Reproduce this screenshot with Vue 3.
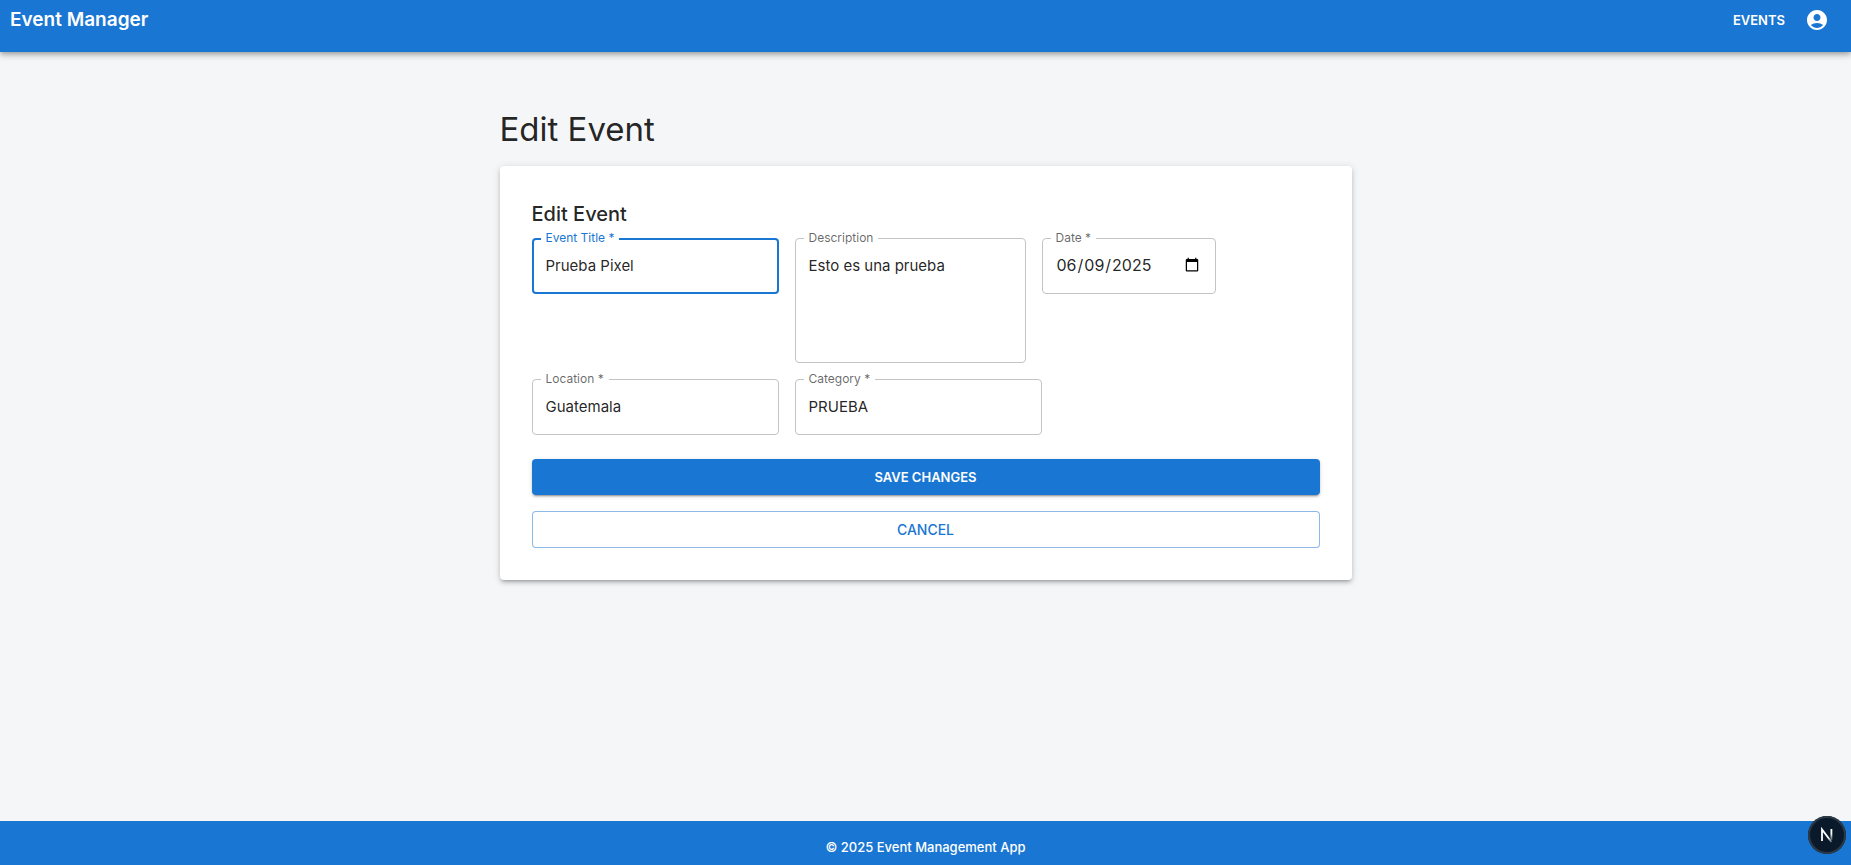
<script setup>
import { ref } from 'vue'

const title = ref('Prueba Pixel')
const description = ref('Esto es una prueba')
const date = ref('2025-06-09')
const location = ref('Guatemala')
const category = ref('PRUEBA')
</script>

<template>
  <div class="page">
    <header class="bar">
      <a class="brand" href="#">Event Manager</a>
      <nav class="nav">
        <a class="nav-link" href="#">EVENTS</a>
        <button class="account" type="button" aria-label="Account">
          <svg viewBox="0 0 24 24" width="24" height="24" fill="currentColor" aria-hidden="true">
            <path d="M12 2C6.48 2 2 6.48 2 12s4.48 10 10 10 10-4.48 10-10S17.52 2 12 2m0 4c1.93 0 3.5 1.57 3.5 3.5S13.93 13 12 13s-3.5-1.57-3.5-3.5S10.070 6 12 6m0 14c-2.030 0-4.430-.82-6.140-2.880C7.550 15.800 9.680 15 12 15s4.450.8 6.140 2.120C16.430 19.180 14.030 20 12 20" />
          </svg>
        </button>
      </nav>
    </header>

    <main class="content">
      <h1 class="heading">Edit Event</h1>
      <form class="card" @submit.prevent>
        <h2 class="subheading">Edit Event</h2>
        <div class="fields">
          <div class="field active">
            <label for="title">Event Title *</label>
            <input id="title" v-model="title" type="text" required />
          </div>
          <div class="field field-area">
            <label for="description">Description</label>
            <textarea id="description" v-model="description" rows="4"></textarea>
          </div>
          <div class="field field-date">
            <label for="date">Date *</label>
            <input id="date" v-model="date" type="date" required />
          </div>
          <div class="field">
            <label for="location">Location *</label>
            <input id="location" v-model="location" type="text" required />
          </div>
          <div class="field">
            <label for="category">Category *</label>
            <input id="category" v-model="category" type="text" required />
          </div>
        </div>
        <div class="actions">
          <button class="btn primary" type="submit">SAVE CHANGES</button>
          <button class="btn outlined" type="button">CANCEL</button>
        </div>
      </form>
    </main>

    <footer class="footer">© 2025 Event Management App</footer>

    <button class="dev-badge" type="button" aria-label="Developer tools">
      <svg viewBox="0 0 38 38" width="38" height="38" fill="none" aria-hidden="true">
        <defs>
          <linearGradient id="fade-stem" x1="0" y1="13" x2="0" y2="25" gradientUnits="userSpaceOnUse">
            <stop offset="0.4" stop-color="#fff" />
            <stop offset="1" stop-color="#fff" stop-opacity="0.1" />
          </linearGradient>
          <linearGradient id="fade-slope" x1="14" y1="13" x2="25" y2="27" gradientUnits="userSpaceOnUse">
            <stop offset="0.6" stop-color="#fff" />
            <stop offset="1" stop-color="#fff" stop-opacity="0.1" />
          </linearGradient>
        </defs>
        <path d="M14 25V13.500L23.500 26" stroke="url(#fade-slope)" stroke-width="1.800" />
        <rect x="22.500" y="13" width="1.800" height="11" fill="url(#fade-stem)" />
      </svg>
    </button>
  </div>
</template>

<style>
body {
  margin: 0;
}
</style>

<style scoped>
.page {
  min-height: 100vh;
  display: flex;
  flex-direction: column;
  background: #f4f6f8;
  color: rgba(0, 0, 0, 0.87);
  font-family: Inter, "Liberation Sans", sans-serif;
  font-size: 16px;
}
.page *,
.page {
  box-sizing: border-box;
}
.bar {
  display: flex;
  justify-content: space-between;
  align-items: center;
  padding: 4px 22px 16px 10px;
  background: #1976d2;
  color: #fff;
  box-shadow: 0 2px 4px -1px rgba(0, 0, 0, 0.2), 0 4px 5px rgba(0, 0, 0, 0.14), 0 1px 10px rgba(0, 0, 0, 0.12);
}
.brand {
  color: inherit;
  text-decoration: none;
  font-size: 19px;
  font-weight: 600;
  line-height: 32px;
}
.nav {
  display: flex;
  align-items: center;
  gap: 20px;
}
.nav-link {
  color: inherit;
  text-decoration: none;
  font-size: 13px;
  font-weight: 600;
}
.account {
  display: flex;
  padding: 0;
  border: 0;
  background: none;
  color: inherit;
}
.content {
  flex: 1;
  width: 100%;
  max-width: 900px;
  margin: 0 auto;
  padding: 56px 24px 24px;
}
.heading {
  margin: 0 0 16px;
  font-size: 33px;
  font-weight: 400;
  line-height: 42px;
}
.card {
  padding: 32px;
  background: #fff;
  border-radius: 4px;
  box-shadow: 0 3px 3px -2px rgba(0, 0, 0, 0.2), 0 3px 4px rgba(0, 0, 0, 0.14), 0 1px 8px rgba(0, 0, 0, 0.12);
}
.subheading {
  margin: 0 0 8px;
  font-size: 20px;
  font-weight: 500;
  line-height: 32px;
}
.fields {
  display: flex;
  flex-wrap: wrap;
  align-items: flex-start;
  gap: 16px;
}
.field {
  position: relative;
  width: 247px;
}
.field-area {
  width: 231px;
}
.field-date {
  width: 174px;
}
.field label {
  position: absolute;
  top: -8px;
  left: 9px;
  padding: 0 5px;
  background: #fff;
  color: rgba(0, 0, 0, 0.6);
  font-size: 12px;
  line-height: 16px;
}
.field input,
.field textarea {
  display: block;
  width: 100%;
  height: 56px;
  margin: 0;
  padding: 0 13px 2px;
  border: 1px solid #c4c4c4;
  border-radius: 4px;
  background: transparent;
  color: inherit;
  font: inherit;
  font-size: 15px;
  line-height: 23px;
  outline: 0;
  resize: none;
}
.field textarea {
  height: 125px;
  padding: 15px 13px;
}
.field-date input {
  font-size: 16px;
}
.active label {
  color: #1976d2;
}
.active input {
  border: 2px solid #1976d2;
  padding: 0 12px 2px;
}
.actions {
  display: flex;
  flex-direction: column;
  gap: 16px;
  margin-top: 24px;
}
.btn {
  padding: 6px 16px;
  border: 0;
  border-radius: 4px;
  font: inherit;
  font-size: 13px;
  font-weight: 600;
  line-height: 24px;
}
.primary {
  background: #1976d2;
  color: #fff;
  box-shadow: 0 3px 1px -2px rgba(0, 0, 0, 0.2), 0 2px 2px rgba(0, 0, 0, 0.14), 0 1px 5px rgba(0, 0, 0, 0.12);
}
.outlined {
  padding: 5px 15px;
  border: 1px solid rgba(25, 118, 210, 0.5);
  background: #fff;
  color: #1976d2;
  font-size: 14px;
  font-weight: 500;
  line-height: 25px;
}
.footer {
  padding: 16px 16px 8px;
  background: #1976d2;
  color: #fff;
  font-size: 13px;
  font-weight: 500;
  line-height: 20px;
  text-align: center;
}
.dev-badge {
  position: fixed;
  right: 5px;
  bottom: 11px;
  display: flex;
  padding: 0;
  border: 0;
  border-radius: 50%;
  background: #0b1a2b;
  box-shadow: inset 0 0 0 2px #2c3a48;
}
</style>
